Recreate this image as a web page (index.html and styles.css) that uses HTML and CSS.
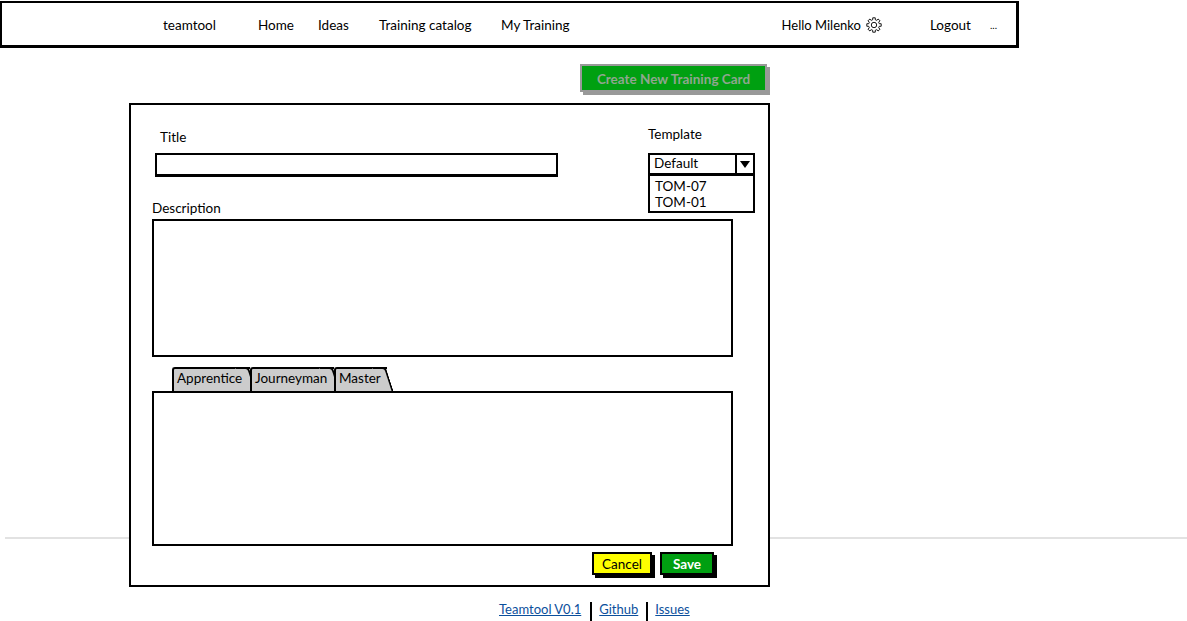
FILE: index.html
```html
<!DOCTYPE html>
<html lang="en">
<head>
<meta charset="UTF-8">
<meta name="viewport" content="width=device-width, initial-scale=1.0">
<title>Teamtool - Create Training Card</title>
<link rel="stylesheet" href="styles.css">
</head>
<body>
<div class="footerRule"></div>
<nav class="topNav">
    <a class="brand">teamtool</a>
    <a class="navHome">Home</a>
    <a class="navIdeas">Ideas</a>
    <a class="navCatalog">Training catalog</a>
    <a>My Training</a>
    <div class="navRight">
        <a class="navHello">Hello Milenko</a>
        <svg class="gear" width="16" height="16" viewBox="0 0 16 16">
            <defs>
                <path id="tooth" d="M5.93 3.01L6.69 2.76L6.73 .81L9.27 .81L9.31 2.76L10.07 3.01"/>
            </defs>
            <g fill="none" stroke="#000" stroke-width="0.9">
                <use href="#tooth"/>
                <use href="#tooth" transform="rotate(45 8 8)"/>
                <use href="#tooth" transform="rotate(90 8 8)"/>
                <use href="#tooth" transform="rotate(135 8 8)"/>
                <use href="#tooth" transform="rotate(180 8 8)"/>
                <use href="#tooth" transform="rotate(225 8 8)"/>
                <use href="#tooth" transform="rotate(270 8 8)"/>
                <use href="#tooth" transform="rotate(315 8 8)"/>
                <circle cx="8" cy="8" r="2.7"/>
            </g>
        </svg>
        <a class="navLogout">Logout</a>
        <span class="navMore">...</span>
    </div>
</nav>

<div class="actionRow">
    <button class="createButton" type="button">Create New Training Card</button>
</div>

<main class="card">
    <div class="topRow">
        <div class="titleField">
            <label class="titleLabel">Title</label>
            <div class="titleInput"></div>
        </div>
        <div class="templateField">
            <label class="templateLabel">Template</label>
            <div class="select">
                <span class="selectValue">Default</span>
                <span class="selectArrow"></span>
            </div>
            <ul class="selectList">
                <li>TOM-07</li>
                <li>TOM-01</li>
            </ul>
        </div>
    </div>

    <label class="descLabel">Description</label>
    <div class="descBox"></div>

    <div class="tabs">
        <div class="tab tabApprentice"><span>Apprentice</span></div>
        <div class="tab tabJourneyman"><span>Journeyman</span></div>
        <div class="tab tabMaster"><span>Master</span></div>
    </div>
    <div class="tabPanel"></div>

    <div class="buttonRow">
        <button class="cancelButton" type="button">Cancel</button>
        <button class="saveButton" type="button">Save</button>
    </div>
</main>

<footer class="footer">
    <a>Teamtool V0.1</a>
    <a>Github</a>
    <a>Issues</a>
</footer>
</body>
</html>
```

FILE: styles.css
```css
* {
    box-sizing: border-box;
}
html, body {
    height: 621px;
    overflow: hidden;
}
body {
    margin: 0;
    padding: 0;
    background-color: #fff;
    color: #000;
    font-family: Lato, "Open Sans", sans-serif;
    font-size: 13.5px;
}
button {
    font-family: inherit;
    font-size: inherit;
    padding: 0;
}
label {
    display: block;
}

/* grey line behind the card */
.footerRule {
    position: absolute;
    top: 537px;
    left: 5px;
    right: 0;
    height: 2px;
    background-color: #e2e2e2;
}

.topNav {
    display: flex;
    align-items: center;
    width: 1019px;
    height: 47px;
    margin: 1px 0 0 0;
    padding: 2px 19px 0 161px;
    border: 2px solid #000;
    border-width: 2px 3px 3px 2px;
    background-color: #fff;
}
.brand {
    width: 95px;
}
.navHome {
    width: 60px;
}
.navIdeas {
    width: 61px;
}
.navCatalog {
    width: 122px;
}
.navRight {
    display: flex;
    align-items: center;
    margin-left: auto;
}
.navHello {
    font-size: 13px;
}
.gear {
    margin: 0 0 1px 5px;
}
.navLogout {
    margin-left: 48px;
}
.navMore {
    margin-left: 19px;
    font-size: 10px;
}

.actionRow {
    display: flex;
    justify-content: flex-end;
    width: 767px;
    margin-top: 16px;
}
.createButton {
    width: 187px;
    height: 28px;
    padding-top: 2px;
    border: 2px solid #999;
    box-shadow: 3px 3px 0 #999;
    background-color: #00a011;
    color: #8fa68f;
    font-weight: 700;
}

.card {
    position: relative;
    width: 641px;
    height: 484px;
    margin: 11px 0 0 129px;
    padding: 0 0 0 21px;
    border: 2px solid #000;
    background-color: #fff;
}

.topRow {
    display: flex;
    height: 94px;
}
.titleField {
    width: 403px;
    margin-left: 3px;
}
.titleLabel {
    margin: 23px 0 0 5px;
    line-height: 18px;
}
.titleInput {
    height: 24px;
    margin-top: 7px;
    border: 2px solid #000;
    border-bottom-width: 3px;
}
.templateField {
    width: 107px;
    margin-left: 90px;
}
.templateLabel {
    margin-top: 20px;
    line-height: 18px;
}
.select {
    display: flex;
    height: 22px;
    margin-top: 10px;
    border: 2px solid #000;
}
.selectValue {
    flex: 1;
    padding-left: 4px;
    line-height: 17px;
}
.selectArrow {
    position: relative;
    width: 18px;
    border-left: 2px solid #000;
}
.selectArrow::after {
    content: "";
    position: absolute;
    top: 6px;
    left: 3px;
    border-style: solid;
    border-width: 7px 5px 0 5px;
    border-color: #000 transparent transparent transparent;
}
.selectList {
    height: 39px;
    margin: -1px 0 0 0;
    padding: 2px 0 0 5px;
    border: 2px solid #000;
    list-style: none;
    line-height: 16px;
}

.descLabel {
    height: 20px;
    line-height: 18px;
}
.descBox {
    width: 581px;
    height: 138px;
    border: 2px solid #000;
}

.tabs {
    display: flex;
    height: 24px;
    margin: 10px 0 0 20px;
}
.tab {
    position: relative;
    height: 24px;
    border-top: 2px solid #000;
    border-left: 2px solid #000;
    border-radius: 3px 0 0 0;
    background-color: #ccc;
    line-height: 19px;
}
.tab span {
    position: relative;
    z-index: 1;
    padding-left: 3px;
}
/* slanted right edge of a tab */
.tab::after {
    content: "";
    position: absolute;
    top: -2px;
    right: -3px;
    width: 12px;
    height: 24px;
    border-top: 2px solid #000;
    border-right: 2px solid #000;
    border-radius: 0 4px 0 0;
    background-color: #ccc;
    transform: skewX(18deg);
}
.tabApprentice {
    width: 78px;
}
.tabJourneyman {
    width: 84px;
}
.tabMaster {
    width: 53px;
}

.tabPanel {
    position: relative;
    width: 581px;
    height: 155px;
    border: 2px solid #000;
    background-color: #fff;
}

.buttonRow {
    display: flex;
    gap: 8px;
    margin: 6px 0 0 440px;
}
.cancelButton,
.saveButton {
    height: 23px;
    border: 2px solid #000;
    box-shadow: 3px 3px 0 #000;
}
.cancelButton {
    width: 60px;
    background-color: #ff0;
    color: #000;
}
.saveButton {
    width: 54px;
    background-color: #009f11;
    color: #fff;
    font-weight: 700;
}

.footer {
    display: flex;
    height: 19px;
    margin: 15px 0 0 490px;
    font-size: 13px;
    line-height: 15px;
}
.footer a {
    padding: 0 9px;
    color: #0b4f9c;
    text-decoration: underline;
}
.footer a + a {
    padding: 0 8px 0 7px;
    border-left: 2px solid #000;
}
```
